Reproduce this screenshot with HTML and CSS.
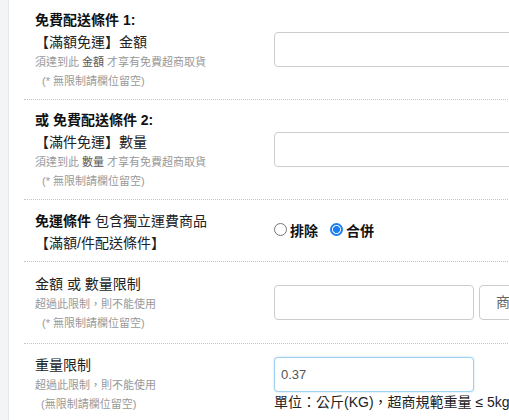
FILE: index.html
```html
<!DOCTYPE html>
<html lang="zh-Hant">
<head>
<meta charset="utf-8">
<link rel="stylesheet" href="styles.css">
</head>
<body>
<div class="page">
  <aside class="side"></aside>
  <main class="main">
    <div class="row r1">
      <div class="label">
        <div class="title"><b>免費配送條件 1:</b></div>
        <div class="title">【滿額免運】金額</div>
        <div class="small">須達到此 <span class="hl">金額</span> 才享有免費超商取貨</div>
        <div class="small ind">(* 無限制請欄位留空)</div>
      </div>
      <div class="field"><div class="input wide"></div></div>
    </div>
    <div class="row r2">
      <div class="label">
        <div class="title"><b>或 免費配送條件 2:</b></div>
        <div class="title">【滿件免運】數量</div>
        <div class="small">須達到此 <span class="hl">數量</span> 才享有免費超商取貨</div>
        <div class="small ind">(* 無限制請欄位留空)</div>
      </div>
      <div class="field"><div class="input wide"></div></div>
    </div>
    <div class="row r3">
      <div class="label">
        <div class="title"><b>免運條件</b> 包含獨立運費商品</div>
        <div class="title">【滿額/件配送條件】</div>
      </div>
      <div class="field radios">
        <label class="radio"><span class="dot"></span>排除</label>
        <label class="radio"><span class="dot on"></span>合併</label>
      </div>
    </div>
    <div class="row r4">
      <div class="label">
        <div class="title">金額 或 數量限制</div>
        <div class="small">超過此限制，則不能使用</div>
        <div class="small ind">(* 無限制請欄位留空)</div>
      </div>
      <div class="field pair">
        <div class="input half"></div>
        <div class="input addon">商品數量</div>
      </div>
    </div>
    <div class="row r5">
      <div class="label">
        <div class="title">重量限制</div>
        <div class="small">超過此限制，則不能使用</div>
        <div class="small ind2">(無限制請欄位留空)</div>
      </div>
      <div class="field col">
        <div class="input half focus">0.37</div>
        <div class="hint">單位：公斤(KG)，超商規範重量 ≤ 5kg</div>
      </div>
    </div>
  </main>
</div>
</body>
</html>
```
FILE: styles.css
```css
html, body {
  margin: 0;
  padding: 0;
  overflow: hidden;
  background: #fff;
}
body {
  font-family: "Liberation Sans", "Noto Sans CJK TC", sans-serif;
  color: #222;
  font-size: 14px;
}
.page {
  display: flex;
  width: 760px;
  height: 420px;
}
.side {
  width: 8px;
  flex: none;
  background: #f3f4f6;
  border-right: 1px solid #e6e7ea;
}
.main {
  flex: 1;
  padding-left: 15px;
}
.row {
  display: flex;
  align-items: center;
  box-sizing: border-box;
  border-bottom: 1px dotted #c4c4c4;
}
.r1 { height: 100px; }
.r2 { height: 100px; }
.r3 { height: 62px; padding-top: 2px; }
.r4 { height: 82px; }
.r5 { border-bottom: none; padding-top: 10px; align-items: center; }
.label {
  width: 239px;
  padding-left: 11px;
  flex: none;
}
.title {
  line-height: 22px;
  font-size: 14px;
  color: #222;
}
.title b { font-weight: bold; color: #111; }
.small {
  font-size: 11px;
  line-height: 19px;
  color: #999;
}
.small .hl { color: #555; }
.ind { padding-left: 7px; }
.ind2 { padding-left: 6px; }
.field { display: flex; }
.col { flex-direction: column; }
.pair { gap: 5px; }
.input {
  box-sizing: border-box;
  height: 35px;
  border: 1px solid #cccccc;
  border-radius: 4px;
  background: #fff;
  font-size: 13px;
  color: #555;
  line-height: 33px;
  padding: 0 6px;
}
.wide { width: 420px; }
.half { width: 200px; }
.addon { width: 160px; padding-left: 16px; font-size: 14px; color: #666; }
.focus {
  border-color: #9fd2f0;
  box-shadow: 0 0 2px rgba(102, 175, 233, 0.55);
}
.hint {
  font-size: 14px;
  line-height: 20px;
  color: #222;
  white-space: nowrap;
}
.radios { align-items: center; margin-top: -4px; }
.radio {
  display: flex;
  align-items: center;
  font-weight: bold;
  font-size: 14px;
  margin-right: 12px;
  color: #111;
}
.dot {
  box-sizing: border-box;
  width: 13px;
  height: 13px;
  border: 1px solid #767676;
  border-radius: 50%;
  margin-right: 3px;
  background: #fff;
}
.dot.on {
  border: 2px solid #1a7ff5;
  background: radial-gradient(circle, #1a7ff5 0 3.2px, #fff 3.8px);
}
```
